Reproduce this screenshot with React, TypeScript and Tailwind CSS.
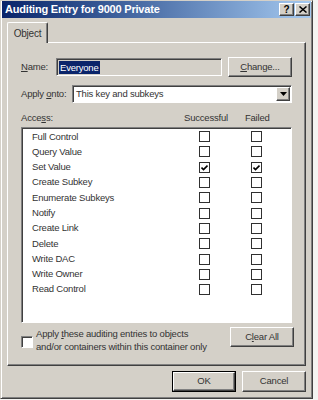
import { ReactNode } from "react";

const rows = [
  { label: "Full Control", ok: false, fail: false },
  { label: "Query Value", ok: false, fail: false },
  { label: "Set Value", ok: true, fail: true },
  { label: "Create Subkey", ok: false, fail: false },
  { label: "Enumerate Subkeys", ok: false, fail: false },
  { label: "Notify", ok: false, fail: false },
  { label: "Create Link", ok: false, fail: false },
  { label: "Delete", ok: false, fail: false },
  { label: "Write DAC", ok: false, fail: false },
  { label: "Write Owner", ok: false, fail: false },
  { label: "Read Control", ok: false, fail: false },
];

function Button({
  children,
  className = "",
  isDefault = false,
}: {
  children: ReactNode;
  className?: string;
  isDefault?: boolean;
}) {
  if (isDefault) {
    return (
      <div className={`border border-black ${className}`}>
        <div className="w-full h-full flex items-center justify-center border border-t-white border-l-white border-r-[#404040] border-b-[#404040] shadow-[inset_-1px_-1px_#808080]">
          {children}
        </div>
      </div>
    );
  }
  return (
    <div
      className={`flex items-center justify-center border border-t-white border-l-white border-r-[#404040] border-b-[#404040] shadow-[inset_-1px_-1px_#808080,inset_1px_1px_#d4d0c8] ${className}`}
    >
      {children}
    </div>
  );
}

function Check({ checked }: { checked: boolean }) {
  return (
    <div className="w-[11px] h-[11px] bg-white border border-[#303030] flex items-center justify-center shrink-0">
      {checked && (
        <svg width="7" height="7" viewBox="0 0 7 7">
          <path d="M0.5 3.5 L2.5 5.5 L6.5 1.5" stroke="#000" strokeWidth="1.6" fill="none" />
        </svg>
      )}
    </div>
  );
}

export default function App() {
  return (
    <div className="w-[318px] h-[400px] bg-[#f4f4f2] overflow-hidden font-['Liberation_Sans',Arial,sans-serif] text-[9.5px] tracking-[-0.2px] text-[#333]">
      <div className="w-[313px] h-[399px] bg-[#d4d0c8] border border-t-[#d4d0c8] border-l-[#d4d0c8] border-r-[#404040] border-b-[#404040] shadow-[inset_1px_1px_white,inset_-1px_-1px_#808080] flex flex-col px-[1px]">
        {/* Title bar */}
        <div className="h-[17px] flex items-center pl-[3px] pr-[1px] bg-gradient-to-r from-[#0a246a] to-[#a6caf0]">
          <span className="text-white font-bold text-[11px] tracking-[-0.2px] flex-1">
            Auditing Entry for 9000 Private
          </span>
          <Button className="w-[15px] h-[13px] bg-[#d4d0c8] text-[10px] font-bold text-black leading-none">
            ?
          </Button>
          <Button className="w-[15px] h-[13px] bg-[#d4d0c8] ml-[1px]">
            <svg width="8" height="7" viewBox="0 0 8 7">
              <path d="M0.5 0.5 L7.5 6.5 M7.5 0.5 L0.5 6.5" stroke="#000" strokeWidth="1.5" />
            </svg>
          </Button>
        </div>

        {/* Tab */}
        <div className="mt-[4px] ml-[5px] flex relative z-10">
          <div className="w-[41px] h-[21px] bg-[#d4d0c8] border border-b-0 border-t-white border-l-white border-r-[#404040] rounded-t-[2px] shadow-[inset_-1px_0_#808080] flex items-center justify-center text-[10px]">
            Object
          </div>
        </div>

        {/* Panel */}
        <div className="-mt-[1px] ml-[5px] mr-[5px] h-[324px] border border-t-white border-l-white border-r-[#404040] border-b-[#404040] shadow-[inset_-1px_-1px_#808080] pl-[13px] pr-[11px] flex flex-col">
          {/* Name */}
          <div className="mt-[14px] h-[20px] flex items-center">
            <span className="w-[35px]">
              <span className="underline">N</span>ame:
            </span>
            <div className="w-[166px] h-[18px] border border-t-[#808080] border-l-[#808080] border-r-white border-b-white shadow-[inset_1px_1px_#404040] flex items-center pl-[2px]">
              <span className="bg-[#0a246a] text-white px-[1px] leading-[13px]">Everyone</span>
            </div>
            <Button className="ml-[6px] w-[64px] h-[20px]">
              <span>
                <span className="underline">C</span>hange...
              </span>
            </Button>
          </div>

          {/* Apply onto */}
          <div className="mt-[8px] h-[18px] flex items-center">
            <span className="w-[51px]">
              Apply <span className="underline">o</span>nto:
            </span>
            <div className="w-[220px] h-[18px] bg-white border border-t-[#808080] border-l-[#808080] border-r-white border-b-white shadow-[inset_1px_1px_#404040] flex items-center pl-[3px] pr-[1px]">
              <span className="flex-1">This key and subkeys</span>
              <Button className="w-[14px] h-[14px] bg-[#d4d0c8]">
                <svg width="7" height="4" viewBox="0 0 7 4">
                  <path d="M0 0 H7 L3.5 4 Z" fill="#000" />
                </svg>
              </Button>
            </div>
          </div>

          {/* Access header */}
          <div className="mt-[8px] h-[14px] flex items-center">
            <span className="w-[163px]">
              Acce<span className="underline">s</span>s:
            </span>
            <span>Successful</span>
            <span className="ml-[17px]">Failed</span>
          </div>

          {/* List */}
          <div className="mt-[2px] w-[271px] h-[196px] bg-white border border-t-[#808080] border-l-[#808080] border-r-white border-b-white shadow-[inset_1px_1px_#404040] pt-[1px]">
            {rows.map((r) => (
              <div key={r.label} className="h-[15.3px] flex items-center pl-[10px]">
                <span className="w-[167px]">{r.label}</span>
                <Check checked={r.ok} />
                <span className="w-[41px]" />
                <Check checked={r.fail} />
              </div>
            ))}
          </div>

          {/* Bottom row */}
          <div className="mt-[4px] flex items-start">
            <div className="flex-1 flex items-start">
              <div className="mt-[9px] w-[12px] h-[12px] bg-white border border-t-[#808080] border-l-[#808080] border-r-white border-b-white shadow-[inset_1px_1px_#404040]" />
              <div className="ml-[3px] leading-[13px]">
                <div>
                  Apply <span className="underline">t</span>hese auditing entries to objects
                </div>
                <div>and/or containers within this container only</div>
              </div>
            </div>
            <Button className="w-[64px] h-[20px]">
              <span>
                C<span className="underline">l</span>ear All
              </span>
            </Button>
          </div>
        </div>

        {/* Dialog buttons */}
        <div className="mt-[5px] flex justify-end mr-[5px]">
          <Button isDefault className="w-[64px] h-[21px]">
            OK
          </Button>
          <Button className="ml-[6px] w-[64px] h-[21px]">Cancel</Button>
        </div>
      </div>
    </div>
  );
}
